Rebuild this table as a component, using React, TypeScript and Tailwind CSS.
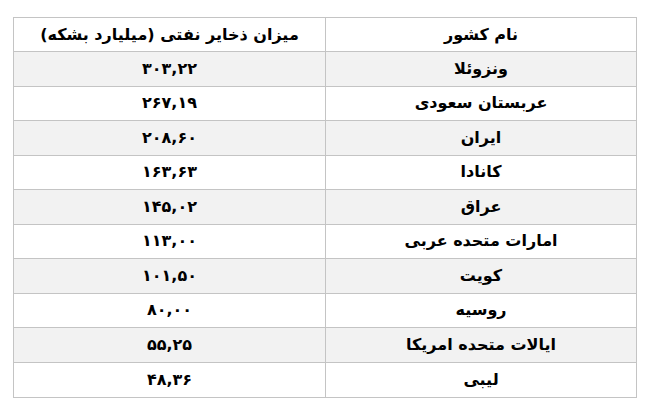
const rows = [
  { country: 'ونزوئلا', value: '۳۰۳,۲۲' },
  { country: 'عربستان سعودی', value: '۲۶۷,۱۹' },
  { country: 'ایران', value: '۲۰۸,۶۰' },
  { country: 'کانادا', value: '۱۶۳,۶۳' },
  { country: 'عراق', value: '۱۴۵,۰۲' },
  { country: 'امارات متحده عربی', value: '۱۱۳,۰۰' },
  { country: 'کویت', value: '۱۰۱,۵۰' },
  { country: 'روسیه', value: '۸۰,۰۰' },
  { country: 'ایالات متحده امریکا', value: '۵۵,۲۵' },
  { country: 'لیبی', value: '۴۸,۳۶' },
];

export default function App() {
  return (
    <div className="h-[419px] w-[663px] bg-white pl-[13px] pt-[17px]">
      <div
        dir="rtl"
        className="w-[624px] border border-[#c4c4c4] text-[16px] font-bold text-black"
        style={{ fontFamily: '"DejaVu Sans", sans-serif' }}
      >
        {/* header */}
        <div className="grid h-[34px] grid-cols-2 border-b border-[#c4c4c4] bg-white">
          <div className="flex items-center justify-center border-l border-[#c4c4c4]">نام کشور</div>
          <div className="flex items-center justify-center tracking-[-0.2px]">میزان ذخایر نفتی (میلیارد بشکه)</div>
        </div>

        {rows.map((row, i) => (
          <div
            key={row.country}
            className={
              'grid h-[34.5px] grid-cols-2 border-[#c4c4c4] ' +
              (i < rows.length - 1 ? 'border-b ' : '') +
              (i % 2 === 0 ? 'bg-[#f2f2f2]' : 'bg-white')
            }
          >
            <div className="flex items-center justify-center border-l border-[#c4c4c4]">{row.country}</div>
            <div className="flex items-center justify-center">{row.value}</div>
          </div>
        ))}
      </div>
    </div>
  );
}
